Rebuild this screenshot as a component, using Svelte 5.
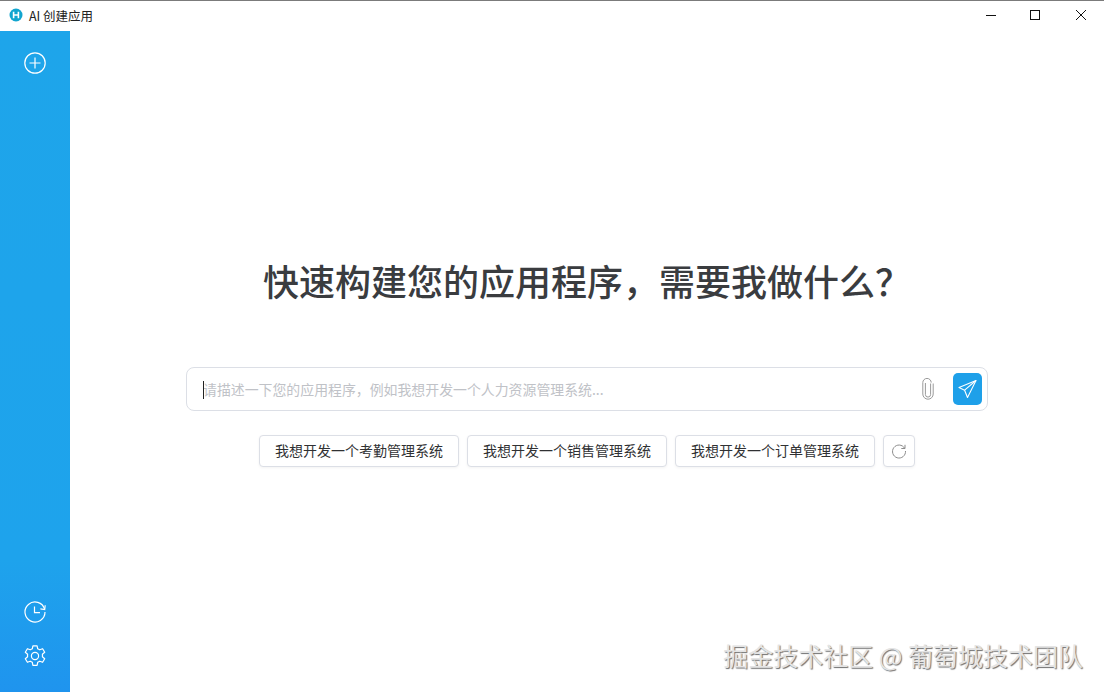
<script>
  const samples = ['我想开发一个考勤管理系统', '我想开发一个销售管理系统', '我想开发一个订单管理系统'];
  let prompt = $state('');
</script>

<div class="window">
  <header class="titlebar">
    <div class="app-title">
      <svg class="logo" width="14" height="14" viewBox="0 0 14 14">
        <circle cx="7" cy="7" r="6.5" fill="#12a5cf" />
        <path d="M4.6 3.8v6.4M9.4 3.8v6.4M4.6 7h4.8" stroke="#fff" stroke-width="1.6" fill="none" />
      </svg>
      <span>AI 创建应用</span>
    </div>
    <div class="win-controls">
      <button aria-label="最小化">
        <svg width="12" height="12" viewBox="0 0 12 12"><path d="M1 6.5h10" stroke="#111" fill="none" /></svg>
      </button>
      <button aria-label="最大化">
        <svg width="12" height="12" viewBox="0 0 12 12"><rect x="1.5" y="1.5" width="9" height="9" stroke="#111" fill="none" /></svg>
      </button>
      <button aria-label="关闭">
        <svg width="12" height="12" viewBox="0 0 12 12"><path d="M1 1l10 10M11 1L1 11" stroke="#111" fill="none" /></svg>
      </button>
    </div>
  </header>

  <div class="body">
    <aside class="sidebar">
      <button class="side-btn" aria-label="新建">
        <svg width="24" height="24" viewBox="0 0 24 24" fill="none" stroke="#fff" stroke-width="1.2">
          <circle cx="12" cy="12" r="10.2" />
          <path d="M12 6.5v11M6.5 12h11" />
        </svg>
      </button>
      <div class="side-bottom">
        <button class="side-btn" aria-label="历史">
          <svg width="24" height="24" viewBox="0 0 24 24" fill="none" stroke="#fff" stroke-width="1.2">
            <path d="M21.6 9.2A10 10 0 1 0 22 12" />
            <path d="M22.2 5.2l-.5 4.3-4.3-.6" />
            <path d="M11.5 6.5v6.2h5.5" />
          </svg>
        </button>
        <button class="side-btn" aria-label="设置">
          <svg width="24" height="24" viewBox="0 0 24 24" fill="none" stroke="#fff" stroke-width="1.2" stroke-linejoin="round">
            <circle cx="12" cy="12" r="3.6" />
            <path d="M9.9 1.8h4.2l.6 3 2.1 1 2.8-1.1 2.1 3.6-2.3 2c.1.8.1 1.7 0 2.4l2.3 2-2.1 3.6-2.8-1.1-2.1 1.1-.6 3H9.9l-.6-3-2.1-1.1-2.8 1.1-2.1-3.6 2.3-2c-.1-.7-.1-1.6 0-2.4l-2.3-2 2.1-3.6 2.8 1.1 2.1-1z" />
          </svg>
        </button>
      </div>
    </aside>

    <main class="content">
      <h1>快速构建您的应用程序，需要我做什么？</h1>

      <div class="prompt-box">
        <span class="caret"></span>
        <input bind:value={prompt} placeholder="请描述一下您的应用程序，例如我想开发一个人力资源管理系统..." />
        <button class="attach" aria-label="附件">
          <svg width="16" height="22" viewBox="0 0 16 22" fill="none" stroke="#9a9a9a" stroke-width="1">
            <path d="M10.6 5.5v11a2.6 2.6 0 0 1-5.2 0V5" />
            <path d="M13.2 5.5V16a5.2 5.2 0 0 1-10.4 0V4.6a4.2 4.2 0 0 1 8.4 0" />
          </svg>
        </button>
        <button class="send" aria-label="发送">
          <svg width="20" height="20" viewBox="0 0 20 20" fill="none" stroke="#fff" stroke-width="1.1" stroke-linejoin="round">
            <path d="M18 1.5L1 8.6l5.6 2.6L9.5 18.5z" />
            <path d="M18 1.5L6.6 11.2" />
          </svg>
        </button>
      </div>

      <div class="samples">
        {#each samples as s}
          <button class="sample" onclick={() => (prompt = s)}>{s}</button>
        {/each}
        <button class="sample refresh" aria-label="刷新">
          <svg width="16" height="16" viewBox="0 0 16 16" fill="none" stroke="#8c8c8c" stroke-width="1">
            <path d="M13.6 5.2A6.5 6.5 0 1 0 14.5 8" />
            <path d="M14 1.8v3.7h-3.7" />
          </svg>
        </button>
      </div>
    </main>
  </div>

  <div class="watermark">掘金技术社区 @ 葡萄城技术团队</div>
</div>

<style>
  :global(body) {
    margin: 0;
    background: #fff;
  }

  .window {
    position: relative;
    width: 1104px;
    height: 692px;
    display: flex;
    flex-direction: column;
    overflow: hidden;
    font-family: "Noto Sans CJK SC", "Liberation Sans", sans-serif;
    color: #262626;
  }

  button {
    font-family: inherit;
    cursor: pointer;
  }

  .titlebar {
    height: 31px;
    flex: none;
    box-sizing: border-box;
    border-top: 1px solid #7b7b7b;
    padding-bottom: 2px;
    display: flex;
    align-items: center;
    justify-content: space-between;
    background: #fff;
  }

  .app-title {
    display: flex;
    align-items: center;
    gap: 6px;
    padding-left: 9px;
    font-size: 12.5px;
    color: #222;
  }

  .logo {
    display: block;
  }

  .win-controls {
    display: flex;
    padding-right: 1px;
  }

  .win-controls button {
    width: 45px;
    height: 27px;
    border: none;
    background: transparent;
    display: flex;
    align-items: center;
    justify-content: center;
    padding: 0;
  }

  .win-controls button:nth-child(2) {
    margin-left: -1px;
    margin-right: 1px;
  }

  .body {
    flex: 1;
    display: flex;
    min-height: 0;
  }

  .sidebar {
    width: 70px;
    flex: none;
    display: flex;
    flex-direction: column;
    align-items: center;
    justify-content: space-between;
    padding: 20px 0 24px;
    box-sizing: border-box;
    background: linear-gradient(180deg, #1ea5ea 0%, #1ea3ec 80%, #1f94ee 100%);
  }

  .side-bottom {
    display: flex;
    flex-direction: column;
    gap: 20px;
  }

  .side-btn {
    width: 24px;
    height: 24px;
    padding: 0;
    border: none;
    background: transparent;
    display: block;
  }

  .side-btn svg {
    display: block;
  }

  .content {
    flex: 1;
    display: flex;
    flex-direction: column;
    align-items: center;
    padding-top: 222px;
    box-sizing: border-box;
  }

  h1 {
    margin: 0 0 60px;
    font-size: 36px;
    line-height: 54px;
    font-weight: 500;
    color: #3a3c3f;
  }

  .prompt-box {
    position: relative;
    width: 802px;
    height: 44px;
    box-sizing: border-box;
    border: 1px solid #dcdfe6;
    border-radius: 8px;
    display: flex;
    align-items: center;
    padding: 0 5px 0 16px;
    background: #fff;
  }

  .caret {
    position: absolute;
    left: 16px;
    top: 13px;
    width: 1px;
    height: 18px;
    background: #222;
  }

  input {
    flex: 1;
    min-width: 0;
    border: none;
    outline: none;
    padding: 0;
    font: inherit;
    font-size: 13.9px;
    color: #303133;
    background: transparent;
  }

  input::placeholder {
    color: #c0c2c7;
    opacity: 1;
  }

  .attach {
    width: 16px;
    height: 22px;
    padding: 0;
    margin-right: 17px;
    border: none;
    background: transparent;
  }

  .attach svg,
  .send svg {
    display: block;
  }

  .send {
    width: 29px;
    height: 32px;
    padding: 0;
    border: none;
    border-radius: 5px;
    background: #1ea0e9;
    display: flex;
    align-items: center;
    justify-content: center;
  }

  .samples {
    display: flex;
    gap: 8px;
    margin-top: 24px;
  }

  .sample {
    height: 32px;
    width: 200px;
    padding: 0 0 2px;
    box-sizing: border-box;
    border: 1px solid #dcdfe6;
    border-radius: 4px;
    background: #fff;
    font-size: 14px;
    color: #303133;
    box-shadow: 0 1px 3px rgba(0, 0, 0, 0.05);
  }

  .refresh {
    width: 32px;
    padding: 0;
    display: flex;
    align-items: center;
    justify-content: center;
  }

  .watermark {
    position: absolute;
    right: 21px;
    bottom: 20px;
    font-size: 25px;
    line-height: 34px;
    color: #e4e4e4;
    text-shadow: 1px 1px 1px #6e6e6e, -1px -1px 0 #fff;
    white-space: nowrap;
  }
</style>
